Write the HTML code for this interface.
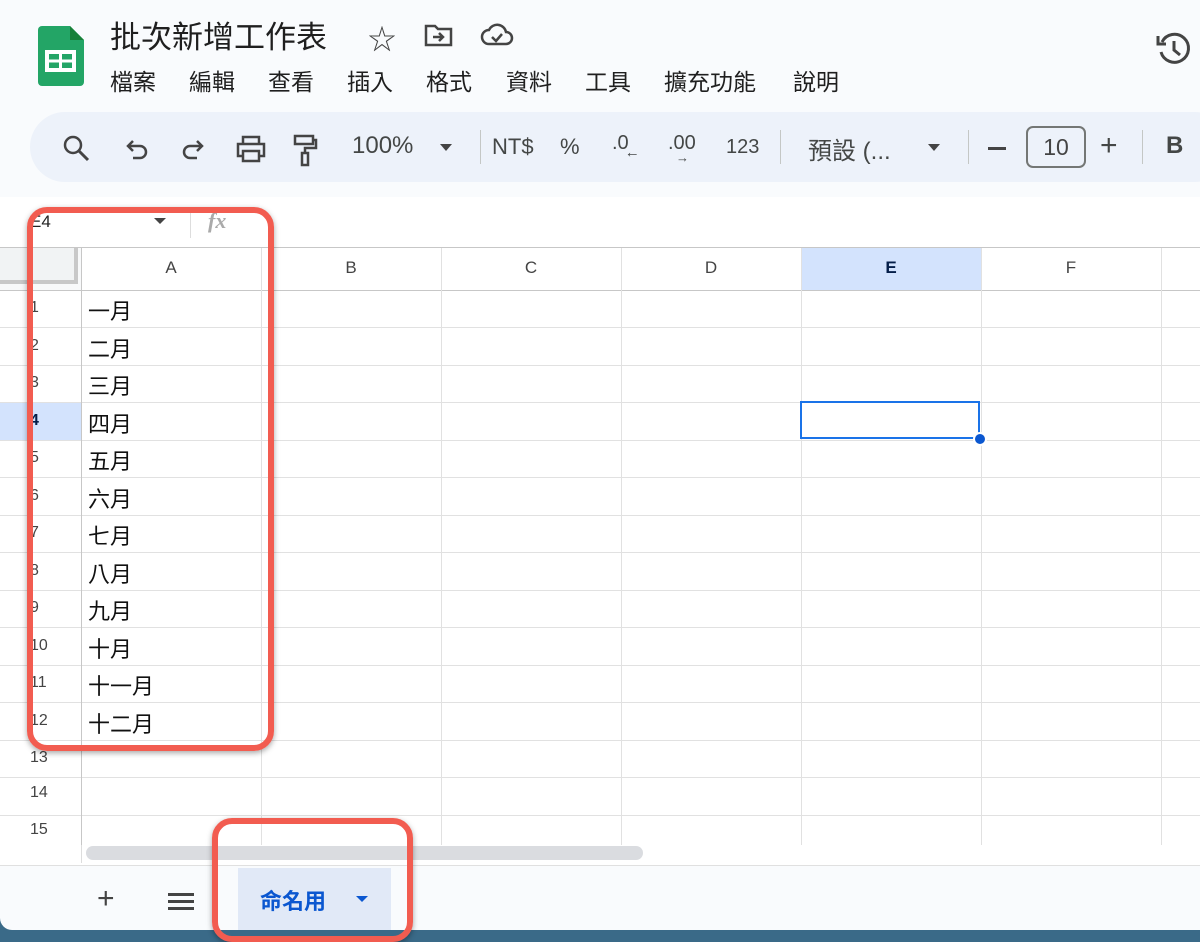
<!DOCTYPE html>
<html><head><meta charset="utf-8"><style>
*{margin:0;padding:0;box-sizing:border-box}
body{width:1200px;height:942px;overflow:hidden;background:#3a6a88;font-family:"Liberation Sans","Noto Sans CJK TC",sans-serif;position:relative}
.win{position:absolute;left:0;top:0;width:1200px;height:930px;background:#f9fbfd;border-bottom-left-radius:12px;overflow:hidden}
.abs{position:absolute}
.title{left:110px;top:12px;font-size:31px;color:#1f1f1f}
.menu{top:63px;font-size:23px;color:#1f1f1f}
.tb{left:30px;top:112px;width:1200px;height:70px;background:#edf2fa;border-radius:35px}
.tt{top:132px;font-size:24px;color:#444746}
.sep{width:1px;height:34px;background:#c4c7c5;top:130px}
.grid{left:0;top:197px;width:1200px;height:669px;background:#fff}
.hl{position:absolute;left:0;width:1200px;height:1px;background:#e1e1e1}
.vl{position:absolute;top:248px;width:1px;height:600px;background:#e1e1e1}
.ch{position:absolute;top:258px;font-size:17px;color:#444;width:180px;text-align:center}
.rn{position:absolute;left:30px;font-size:16px;color:#444}
.ct{position:absolute;left:88px;font-size:22px;color:#111}
.red{position:absolute;border:6px solid #f25c50;border-radius:20px;box-shadow:0 2px 6px rgba(0,0,0,.35)}
</style></head><body>
<div class="win">
<svg class="abs" style="left:38px;top:26px" width="46" height="60" viewBox="0 0 46 60"><path d="M4 0h28l14 14v42a4 4 0 0 1-4 4H4a4 4 0 0 1-4-4V4a4 4 0 0 1 4-4z" fill="#23a566"/><path d="M32 0v14h14z" fill="#188038"/><rect x="9" y="26" width="27" height="18" fill="none" stroke="#fff" stroke-width="4"/><path d="M22.5 26v18M9 35h27" stroke="#fff" stroke-width="3"/></svg>
<div class="abs title">批次新增工作表</div>
<div class="abs" style="left:368px;top:18px;font-size:28px;color:#444">☆</div>
<svg class="abs" style="left:424px;top:22px" width="30" height="26" viewBox="0 0 30 26"><path d="M2 4h9l3 3h13v16H2z" fill="none" stroke="#444" stroke-width="2.5"/><path d="M9 15h10M15 11l4 4-4 4" fill="none" stroke="#444" stroke-width="2.5"/></svg>
<svg class="abs" style="left:480px;top:22px" width="34" height="26" viewBox="0 0 34 26"><path d="M9 22a7 7 0 0 1 0-14 9 9 0 0 1 17 2 6 6 0 0 1 0 12z" fill="none" stroke="#444" stroke-width="2.5"/><path d="M12 15l4 4 6-7" fill="none" stroke="#444" stroke-width="2.5"/></svg>
<div class="abs menu" style="left:110px">檔案</div><div class="abs menu" style="left:189px">編輯</div><div class="abs menu" style="left:268px">查看</div><div class="abs menu" style="left:347px">插入</div><div class="abs menu" style="left:426px">格式</div><div class="abs menu" style="left:506px">資料</div><div class="abs menu" style="left:585px">工具</div><div class="abs menu" style="left:664px">擴充功能</div><div class="abs menu" style="left:793px">說明</div>
<svg class="abs" style="left:1156px;top:30px" width="36" height="38" viewBox="0 0 36 38"><path d="M6 12a14 14 0 1 1-1 10" fill="none" stroke="#444" stroke-width="3"/><path d="M2 6v8h8" fill="none" stroke="#444" stroke-width="3"/><path d="M18 11v9l6 5" fill="none" stroke="#444" stroke-width="3"/></svg>
<div class="abs tb"></div>
<svg class="abs" style="left:62px;top:134px" width="28" height="28" viewBox="0 0 28 28"><circle cx="11" cy="11" r="8" fill="none" stroke="#444" stroke-width="2.5"/><path d="M17 17l9 9" stroke="#444" stroke-width="3"/></svg>
<svg class="abs" style="left:124px;top:138px" width="26" height="24" viewBox="0 0 26 24"><path d="M5 8h11a6 6 0 0 1 0 12H9M9 3L4 8l5 5" fill="none" stroke="#444" stroke-width="2.5"/></svg>
<svg class="abs" style="left:180px;top:138px" width="26" height="24" viewBox="0 0 26 24"><path d="M21 8H10a6 6 0 0 0 0 12h7M17 3l5 5-5 5" fill="none" stroke="#444" stroke-width="2.5"/></svg>
<svg class="abs" style="left:235px;top:134px" width="32" height="30" viewBox="0 0 32 30"><path d="M8 9V3h16v6M8 22H3V10h26v12h-5M8 17h16v10H8z" fill="none" stroke="#444" stroke-width="2.5"/></svg>
<svg class="abs" style="left:292px;top:133px" width="26" height="34" viewBox="0 0 26 34"><rect x="3" y="3" width="18" height="8" fill="none" stroke="#444" stroke-width="2.5"/><path d="M21 7h3v8H13v5" fill="none" stroke="#444" stroke-width="2.5"/><rect x="10" y="20" width="6" height="12" fill="none" stroke="#444" stroke-width="2.5"/></svg>
<div class="abs tt" style="left:352px">100%</div>
<div class="abs" style="left:440px;top:144px;border:6px solid transparent;border-top:7px solid #444"></div>
<div class="abs sep" style="left:480px"></div>
<div class="abs tt" style="left:492px;font-size:22px;top:134px">NT$</div>
<div class="abs tt" style="left:560px;font-size:22px;top:134px">%</div>
<div class="abs tt" style="left:612px;font-size:20px">.0<span style="font-size:15px;position:relative;top:8px;left:-4px">←</span></div>
<div class="abs tt" style="left:668px;font-size:20px">.00<span style="font-size:13px;position:absolute;left:8px;top:18px">→</span></div>
<div class="abs tt" style="left:726px;font-size:20px;top:136px">123</div>
<div class="abs sep" style="left:780px"></div>
<div class="abs tt" style="left:808px;top:131px">預設 (...</div>
<div class="abs" style="left:928px;top:144px;border:6px solid transparent;border-top:7px solid #444"></div>
<div class="abs sep" style="left:968px"></div>
<div class="abs" style="left:988px;top:147px;width:18px;height:2.5px;background:#444"></div>
<div class="abs" style="left:1026px;top:126px;width:60px;height:42px;border:2px solid #747775;border-radius:7px;font-size:23px;color:#444;text-align:center;line-height:38px">10</div>
<div class="abs tt" style="left:1100px;font-size:30px;top:129px">+</div>
<div class="abs sep" style="left:1142px"></div>
<div class="abs tt" style="left:1166px;font-weight:bold">B</div>
<div class="abs grid"></div>
<div class="abs" style="left:30px;top:212px;font-size:17px;color:#222">E4</div>
<div class="abs" style="left:154px;top:218px;border:6px solid transparent;border-top:6px solid #444"></div>
<div class="abs" style="left:190px;top:212px;width:1px;height:26px;background:#ddd"></div>
<div class="abs" style="left:208px;top:208px;font-size:22px;color:#aaa;font-style:italic;font-weight:bold;font-family:'Liberation Serif',serif">fx</div>
<div class="abs" style="left:0;top:248px;width:81px;height:42px;background:#f8f9fa"></div>
<div class="abs" style="left:0;top:248px;width:78px;height:36px;background:#f1f3f4;border-right:4px solid #c8c8c8;border-bottom:4px solid #c8c8c8"></div>
<div class="abs" style="left:801px;top:248px;width:180px;height:42px;background:#d3e3fd"></div>
<div class="abs" style="left:0;top:402px;width:81px;height:38px;background:#d3e3fd"></div>
<div class="hl" style="top:247px;background:#c7c7c7"></div><div class="hl" style="top:290px;background:#c7c7c7"></div>
<div class="hl" style="top:327px"></div><div class="hl" style="top:365px"></div><div class="hl" style="top:402px"></div><div class="hl" style="top:440px"></div><div class="hl" style="top:477px"></div><div class="hl" style="top:515px"></div><div class="hl" style="top:552px"></div><div class="hl" style="top:590px"></div><div class="hl" style="top:627px"></div><div class="hl" style="top:665px"></div><div class="hl" style="top:702px"></div><div class="hl" style="top:740px"></div><div class="hl" style="top:777px"></div><div class="hl" style="top:815px"></div>
<div class="vl" style="left:81px;background:#c7c7c7"></div><div class="vl" style="left:261px"></div><div class="vl" style="left:441px"></div><div class="vl" style="left:621px"></div><div class="vl" style="left:801px"></div><div class="vl" style="left:981px"></div><div class="vl" style="left:1161px"></div>
<div class="ch" style="left:81px">A</div><div class="ch" style="left:261px">B</div><div class="ch" style="left:441px">C</div><div class="ch" style="left:621px">D</div><div class="ch" style="left:801px;font-weight:bold;color:#041e49">E</div><div class="ch" style="left:981px">F</div>
<div class="rn" style="top:299px">1</div><div class="rn" style="top:337px">2</div><div class="rn" style="top:374px">3</div><div class="rn" style="top:412px;font-weight:bold;color:#041e49">4</div><div class="rn" style="top:449px">5</div><div class="rn" style="top:487px">6</div><div class="rn" style="top:524px">7</div><div class="rn" style="top:562px">8</div><div class="rn" style="top:599px">9</div><div class="rn" style="top:637px">10</div><div class="rn" style="top:674px">11</div><div class="rn" style="top:712px">12</div><div class="rn" style="top:749px">13</div><div class="rn" style="top:784px">14</div><div class="rn" style="top:821px">15</div>
<div class="ct" style="top:294px">一月</div><div class="ct" style="top:332px">二月</div><div class="ct" style="top:369px">三月</div><div class="ct" style="top:407px">四月</div><div class="ct" style="top:444px">五月</div><div class="ct" style="top:482px">六月</div><div class="ct" style="top:519px">七月</div><div class="ct" style="top:557px">八月</div><div class="ct" style="top:594px">九月</div><div class="ct" style="top:632px">十月</div><div class="ct" style="top:669px">十一月</div><div class="ct" style="top:707px">十二月</div>
<div class="abs" style="left:800px;top:401px;width:180px;height:38px;border:2px solid #1a73e8"></div>
<div class="abs" style="left:973px;top:432px;width:14px;height:14px;border-radius:50%;background:#0b57d0;border:2px solid #fff"></div>
<div class="abs" style="left:0;top:845px;width:1200px;height:21px;background:#fff"></div>
<div class="abs" style="left:81px;top:845px;width:1px;height:18px;background:#ddd"></div>
<div class="abs" style="left:86px;top:846px;width:557px;height:14px;background:#dadce0;border-radius:7px"></div>
<div class="abs" style="left:0;top:865px;width:1200px;height:1px;background:#e0e0e0"></div>
<div class="abs" style="left:97px;top:882px;font-size:30px;color:#444">+</div>
<div class="abs" style="left:168px;top:900px;width:26px;height:2.5px;background:#444;box-shadow:0 -7px 0 #444,0 7px 0 #444"></div>
<div class="abs" style="left:238px;top:868px;width:153px;height:62px;background:#e1e9f7"></div>
<div class="abs" style="left:260px;top:884px;font-size:22px;color:#0b57d0;font-weight:bold">命名用</div>
<div class="abs" style="left:356px;top:896px;border:6px solid transparent;border-top:6px solid #0b57d0"></div>
</div>
<div class="red" style="left:27px;top:207px;width:247px;height:544px"></div>
<div class="red" style="left:212px;top:818px;width:201px;height:124px"></div>
</body></html>
